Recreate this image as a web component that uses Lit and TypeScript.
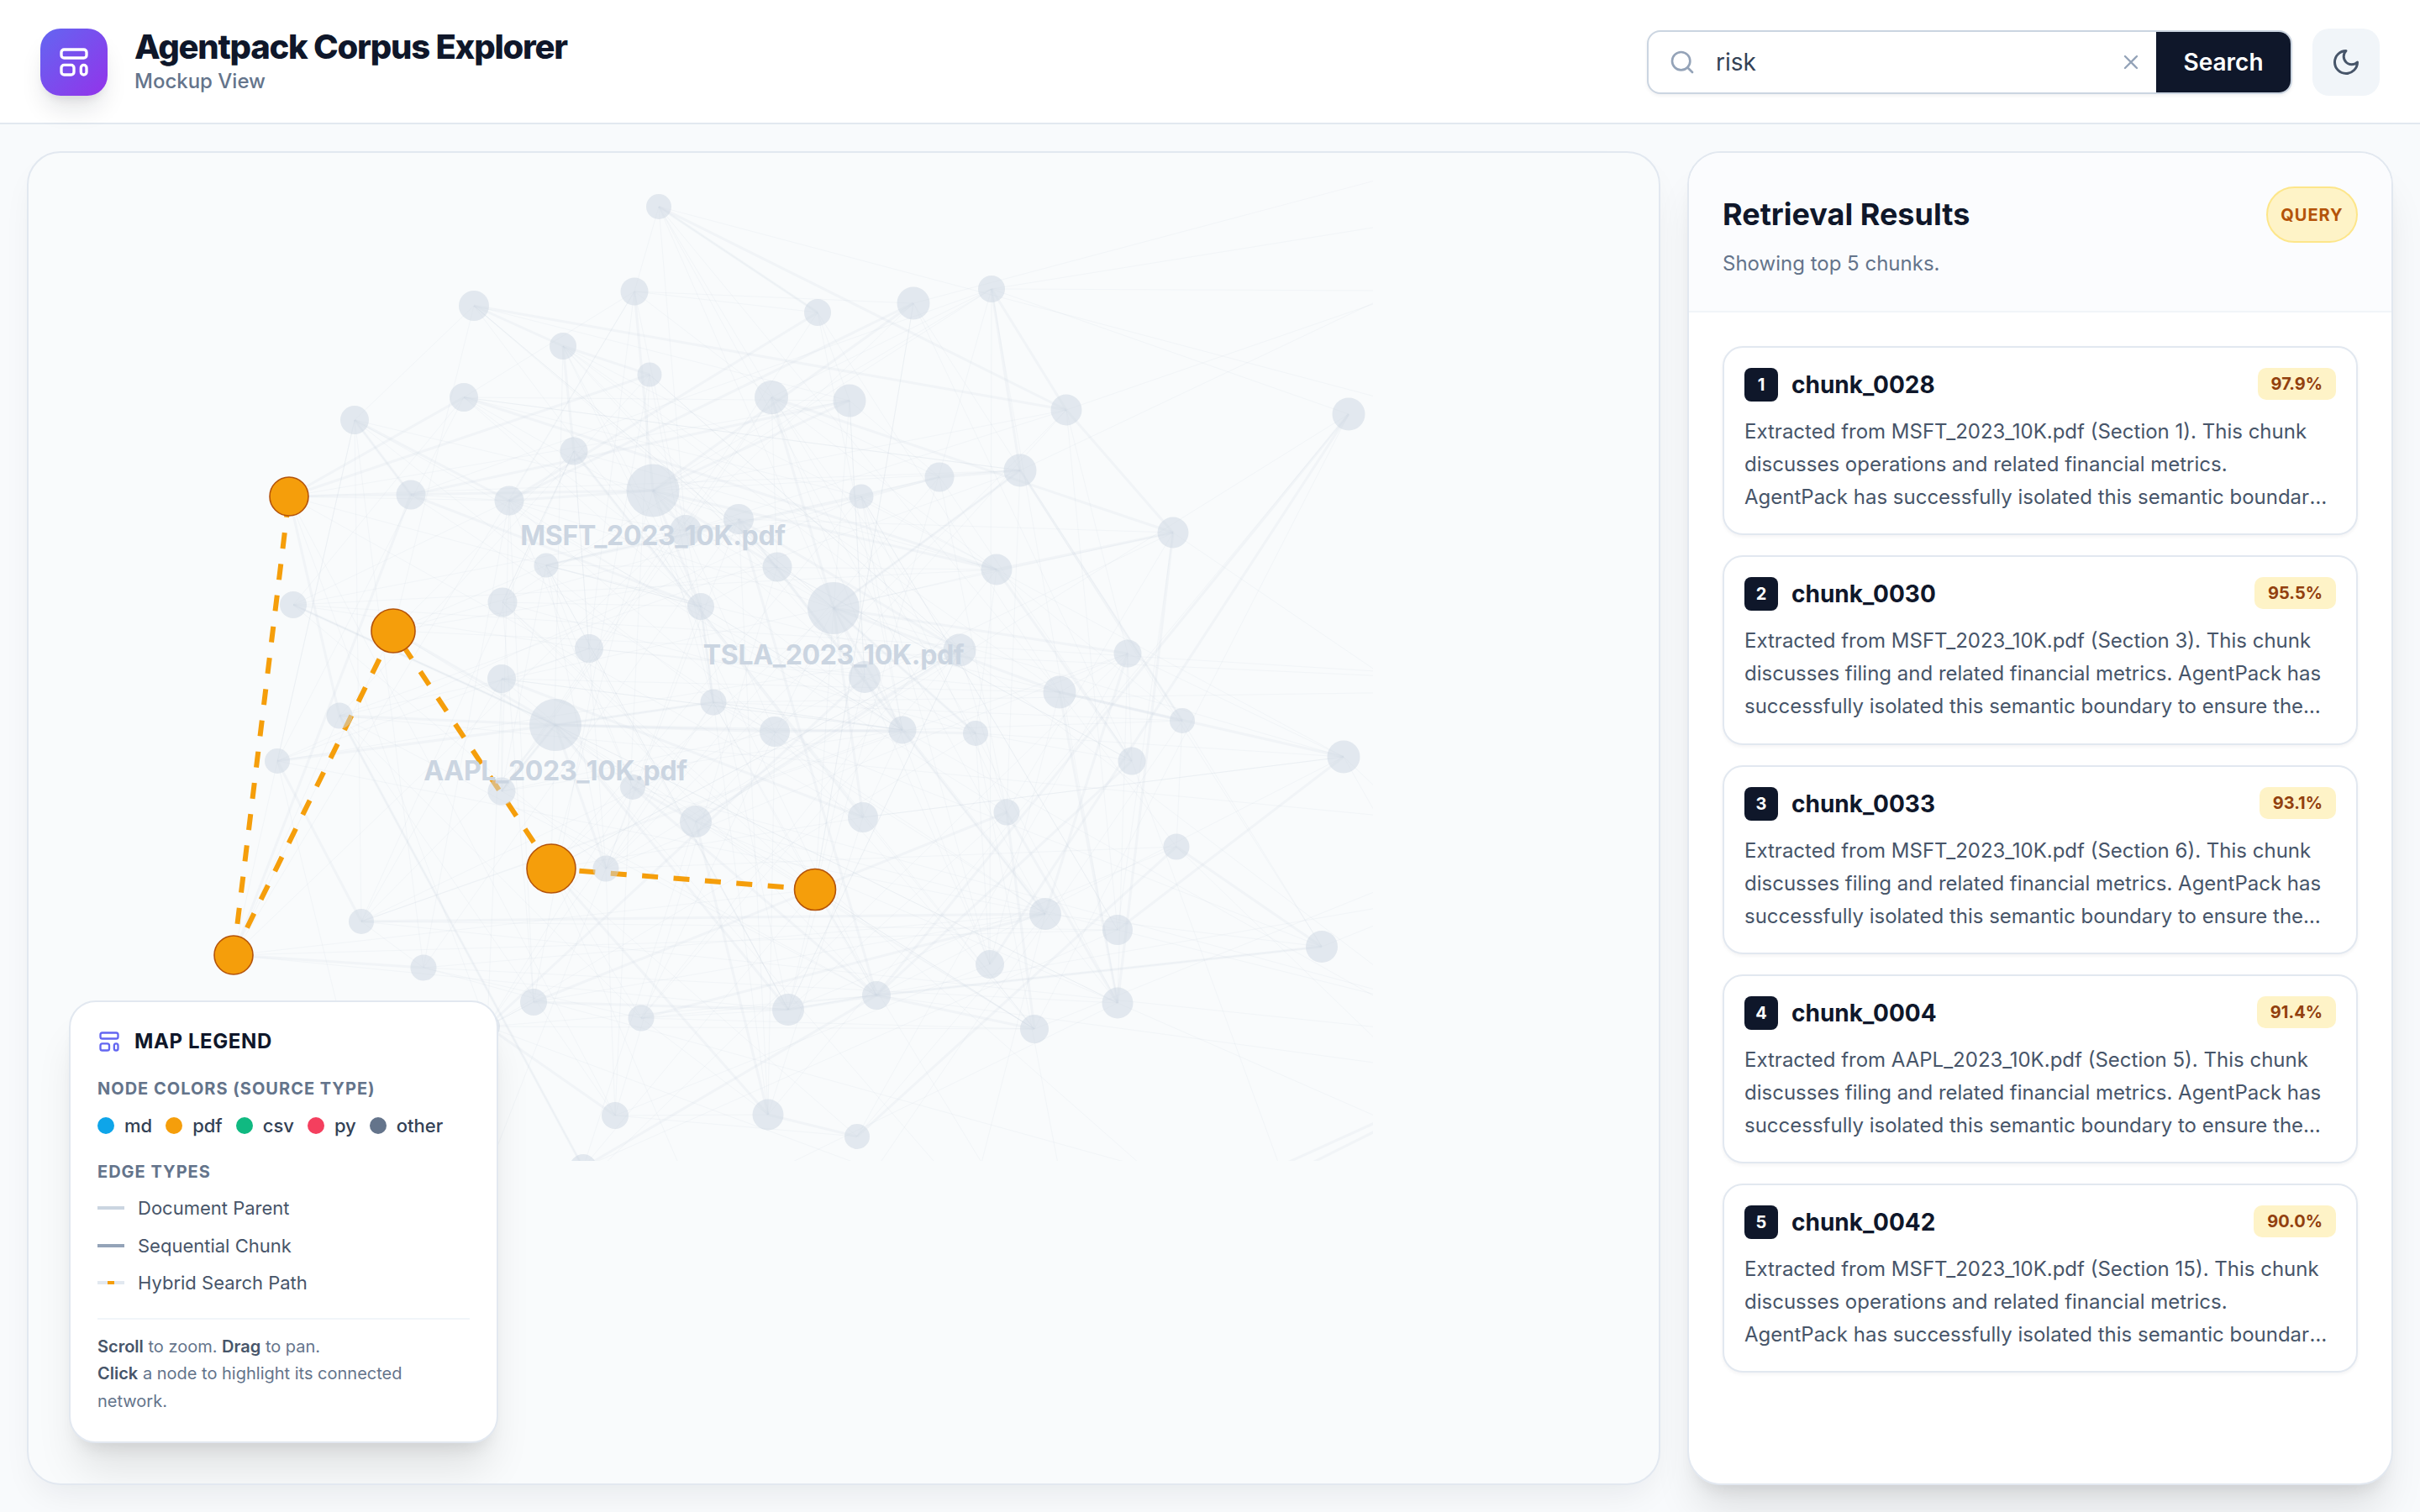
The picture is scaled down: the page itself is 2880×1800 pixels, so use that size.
import { LitElement, css, html, svg } from 'lit'
import { customElement } from 'lit/decorators.js'

// dimmed graph nodes [x, y, r], page pixels
const NODES: number[][] = [
  [784, 246, 15], [564, 364, 18], [755, 347, 16.5], [973, 372, 16], [670, 412, 16],
  [773, 446, 14.5], [552, 473, 17], [918, 473, 20], [1011, 477, 19.5], [422, 500, 17],
  [683, 537, 16.5], [777, 584, 31.5], [489, 589, 17.5], [606, 596, 17.5], [879, 618, 18],
  [816, 632, 19], [650, 673, 14.5], [925, 675, 17.5], [1087, 361, 19.5], [1180, 344, 16],
  [1269, 488, 18.5], [1605, 493, 19.5], [1214, 560, 19.5], [1118, 568, 17.5], [1025, 591, 14.5],
  [1396, 634, 18.5], [1186, 678, 18.5], [349, 720, 16], [598, 717, 17.5], [834, 722, 16],
  [701, 772, 17], [597, 808, 17], [849, 836, 15.5], [661, 863, 31], [404, 852, 15.5],
  [922, 871, 18], [330, 906, 15], [597, 942, 16.5], [753, 937, 15], [828, 978, 19],
  [721, 1034, 15.5], [430, 1097, 15], [504, 1152, 15.5], [635, 1193, 16], [763, 1212, 15.5],
  [938, 1202, 19], [1043, 1185, 17], [732, 1328, 16], [914, 1327, 18.5], [1020, 1353, 15],
  [694, 1390, 16], [580, 1222, 15], [992, 724, 31], [1142, 774, 19.5], [1029, 806, 19],
  [1342, 778, 16.5], [1261, 824, 19.5], [1407, 858, 15], [1074, 869, 16.5], [1161, 873, 15],
  [1347, 906, 16.5], [1599, 901, 19.5], [1027, 973, 18], [1198, 967, 15.5], [1400, 1008, 15.5],
  [1244, 1088, 19], [1330, 1107, 18], [1573, 1127, 19], [1178, 1148, 17], [1330, 1194, 18.5],
  [1231, 1225, 17],
]

// search hits, drawn on top
const HITS: number[][] = [
  [344, 591, 23], [468, 751, 26], [656, 1034, 29], [970, 1059, 24.5], [278, 1137, 23],
]

// hits are joined by dashed lines, each one starts at the first point
const PATHS: number[][] = [
  [278, 1137, 344, 591], [468, 751, 278, 1137], [656, 1034, 468, 751], [970, 1059, 656, 1034],
]

// nodes outside the visible canvas, lines run off towards them
const OFFSCREEN: number[][] = [
  [1900, 640], [1980, 820], [2050, 1010], [1900, 1250], [1820, 1290], [1760, 1500], [1600, 1600], [1300, 1600], [1100, 1650], [900, 1600], [500, 1600],
]

// faint lines that leave the canvas on the right, seen in the picture
const RUNOFF_THIN: number[][] = [
  [1087, 361, 1640, 214], [1180, 344, 1640, 270], [1180, 344, 1640, 346], [1269, 488, 1640, 360],
  [784, 246, 1640, 473], [1214, 560, 1640, 358], [1573, 1127, 1640, 1100], [1599, 901, 1640, 940],
  [1400, 1008, 1640, 1240], [1330, 1194, 1640, 1330], [1231, 1225, 1640, 1060], [1396, 634, 1640, 800],
]
const RUNOFF_HEAVY: number[][] = [
  [1530, 1385, 1640, 1335], [1560, 1385, 1640, 1345],
]

const at = (x: number, y: number) => {
  let best = NODES[0]
  let dist = 1e9
  for (const n of [...NODES, ...HITS]) {
    const d = Math.hypot(n[0] - x, n[1] - y)
    if (d < dist) { dist = d; best = n }
  }
  return best
}

// the heavier lines that stand out in the picture, by rough end points
const HEAVY_PAIRS: number[][] = [
  [564, 364, 1269, 488], [564, 364, 670, 412], [670, 412, 773, 446], [670, 412, 683, 537], [552, 473, 1186, 678],
  [422, 500, 606, 596], [422, 500, 489, 589], [344, 591, 773, 446], [344, 591, 552, 473], [344, 591, 777, 584],
  [784, 246, 1269, 488], [1180, 344, 1214, 560], [1180, 344, 1269, 488], [1269, 488, 1396, 634], [918, 473, 1396, 634],
  [1605, 493, 1043, 1185], [1605, 493, 1178, 1148], [1599, 901, 1330, 1107], [1599, 901, 1261, 824], [1407, 858, 1261, 824],
  [1573, 1127, 1043, 1185], [1573, 1127, 1400, 1008], [1347, 906, 1043, 1185], [1261, 824, 1330, 1194], [1198, 967, 1231, 1225],
  [1020, 1353, 1400, 1008], [1020, 1353, 914, 1327], [694, 1390, 1043, 1185], [732, 1328, 580, 1222], [635, 1193, 938, 1202],
  [938, 1202, 1043, 1185], [661, 863, 922, 871], [661, 863, 404, 852], [330, 906, 661, 863], [278, 1137, 504, 1152],
  [430, 1097, 1244, 1088], [404, 852, 694, 1390], [349, 720, 661, 863], [828, 978, 753, 937], [914, 1327, 828, 978],
  [1087, 361, 606, 596], [973, 372, 606, 596], [1087, 361, 777, 584], [1214, 560, 1118, 568], [1118, 568, 1025, 591],
  [1396, 634, 1186, 678], [1186, 678, 777, 584], [992, 724, 1261, 824], [992, 724, 1161, 873], [992, 724, 918, 473],
  [992, 724, 1214, 560], [992, 724, 1342, 778], [992, 724, 1074, 869], [992, 724, 1027, 973], [777, 584, 1011, 477],
  [777, 584, 816, 632], [777, 584, 925, 675], [777, 584, 755, 347], [661, 863, 597, 942], [661, 863, 721, 1034],
  [661, 863, 849, 836], [661, 863, 1161, 873], [1198, 967, 1330, 1194], [1244, 1088, 1342, 778], [1043, 1185, 1231, 1225],
]

function rng(seed: number) {
  return () => {
    seed = (seed + 0x6d2b79f5) | 0
    let t = Math.imul(seed ^ (seed >>> 15), 1 | seed)
    t = (t + Math.imul(t ^ (t >>> 7), 61 | t)) ^ t
    return ((t ^ (t >>> 14)) >>> 0) / 4294967296
  }
}

function buildEdges() {
  const r = rng(4217)
  const all = [...NODES, ...HITS]
  const heavy: number[][] = HEAVY_PAIRS.map((p) => {
    const a = at(p[0], p[1])
    const b = at(p[2], p[3])
    return [a[0], a[1], b[0], b[1]]
  })
  heavy.push(...RUNOFF_HEAVY)
  const thin: number[][] = [...RUNOFF_THIN]
  for (const a of all) {
    for (let k = 0; k < 5; k++) {
      const b = all[Math.floor(r() * all.length)]
      if (b === a) continue
      const d = Math.hypot(a[0] - b[0], a[1] - b[1])
      if (d > 760 && r() < 0.7) continue
      thin.push([a[0], a[1], b[0], b[1]])
    }
    if (a[1] > 700 && r() < 0.6) {
      const o = OFFSCREEN[Math.floor(r() * OFFSCREEN.length)]
      thin.push([a[0], a[1], o[0], o[1]])
    }
    if (r() < 0.55) {
      const b = all[Math.floor(r() * all.length)]
      if (b !== a && Math.hypot(a[0] - b[0], a[1] - b[1]) < 620) heavy.push([a[0], a[1], b[0], b[1]])
    }
  }
  return { heavy, thin }
}

const EDGES = buildEdges()

const LABELS = [
  { x: 777, y: 649, t: 'MSFT_2023_10K.pdf' },
  { x: 992, y: 791, t: 'TSLA_2023_10K.pdf' },
  { x: 661, y: 929, t: 'AAPL_2023_10K.pdf' },
]

const tail = 'AgentPack has successfully isolated this semantic boundary to ensure the retrieved context stays coherent for downstream agents.'

const CHUNKS = [
  { id: 'chunk_0028', score: '97.9%', text: `Extracted from MSFT_2023_10K.pdf (Section 1). This chunk discusses operations and related financial metrics. ${tail}` },
  { id: 'chunk_0030', score: '95.5%', text: `Extracted from MSFT_2023_10K.pdf (Section 3). This chunk discusses filing and related financial metrics. ${tail}` },
  { id: 'chunk_0033', score: '93.1%', text: `Extracted from MSFT_2023_10K.pdf (Section 6). This chunk discusses filing and related financial metrics. ${tail}` },
  { id: 'chunk_0004', score: '91.4%', text: `Extracted from AAPL_2023_10K.pdf (Section 5). This chunk discusses filing and related financial metrics. ${tail}` },
  { id: 'chunk_0042', score: '90.0%', text: `Extracted from MSFT_2023_10K.pdf (Section 15). This chunk discusses operations and related financial metrics. ${tail}` },
]

const SOURCES = ['md', 'pdf', 'csv', 'py', 'other']

const templateIcon = (cls: string) => html`
  <svg class=${cls} viewBox="0 0 24 24" fill="none" stroke="currentColor" stroke-width="2">
    <rect x="3" y="3" width="18" height="6" rx="2"></rect>
    <rect x="3" y="14" width="9" height="7" rx="2"></rect>
    <rect x="17" y="14" width="4" height="7" rx="2"></rect>
  </svg>
`

@customElement('app-root')
export class AppRoot extends LitElement {
  static styles = css`
    :host {
      display: flex;
      flex-direction: column;
      height: 1800px;
      overflow: hidden;
      background: #f8fafc;
      font-family: Inter, "Liberation Sans", sans-serif;
      color: #0f172a;
    }
    * { box-sizing: border-box; }

    .top {
      display: flex;
      align-items: center;
      justify-content: space-between;
      height: 148px;
      padding: 34px 48px 32px;
      background: #fff;
      border-bottom: 2px solid #e2e8f0;
      flex: none;
    }
    .brand { display: flex; align-items: center; gap: 32px; }
    .logo {
      width: 80px;
      height: 80px;
      border-radius: 24px;
      background: linear-gradient(135deg, #6366f1, #9333ea);
      box-shadow: 0 20px 30px -6px rgba(15, 23, 42, 0.12), 0 8px 12px -6px rgba(15, 23, 42, 0.1);
      display: flex;
      align-items: center;
      justify-content: center;
      color: #fff;
    }
    .logo-icon { width: 40px; height: 40px; }
    .brand-text { margin-top: -3px; }
    .title { font-size: 40px; line-height: 44px; font-weight: 800; letter-spacing: -0.031em; }
    .sub { font-size: 24px; line-height: 30px; font-weight: 500; color: #64748b; margin-top: 4px; }

    .tools { display: flex; align-items: center; gap: 24px; }
    .search {
      display: flex;
      width: 768px;
      height: 76px;
      border: 2px solid #cbd5e1;
      border-radius: 16px;
      overflow: hidden;
      background: #fff;
      box-shadow: 0 2px 4px rgba(15, 23, 42, 0.06);
    }
    .field { flex: 1; display: flex; align-items: center; padding: 0 16px 0 24px; }
    .search-icon { width: 32px; height: 32px; color: #94a3b8; flex: none; }
    .query { flex: 1; margin-left: 24px; font-size: 28px; color: #334155; }
    .clear { width: 28px; height: 28px; color: #94a3b8; flex: none; }
    .go {
      width: 160px;
      display: flex;
      align-items: center;
      justify-content: center;
      background: #0f172a;
      color: #fff;
      font-size: 28px;
      font-weight: 600;
    }
    .theme {
      width: 80px;
      height: 80px;
      border-radius: 20px;
      background: #f1f5f9;
      color: #475569;
      display: flex;
      align-items: center;
      justify-content: center;
    }
    .moon { width: 36px; height: 36px; }

    .main { flex: 1; min-height: 0; display: flex; gap: 32px; padding: 32px; }
    .map {
      flex: 1;
      position: relative;
      overflow: hidden;
      background: #f9fbfc;
      border: 2px solid #e2e8f0;
      border-radius: 40px;
      box-shadow: 0 20px 40px -12px rgba(15, 23, 42, 0.08);
    }
    .graph { position: absolute; left: 0; top: 0; width: 1600px; height: 1200px; display: block; }
    .heavy { stroke: #cbd5e1; stroke-width: 3; opacity: 0.16; }
    .thin { stroke: #cbd5e1; stroke-width: 1; opacity: 0.15; }
    .dash { stroke: #f59e0b; stroke-width: 6; stroke-dasharray: 19 18.5; }
    .dim { fill: #cbd5e1; opacity: 0.5; }
    .hit { fill: #f59e0b; stroke: #b45309; stroke-width: 1.6; }
    .doc { fill: #cbd5e1; font-size: 32px; font-weight: 700; letter-spacing: -0.01em; text-anchor: middle; }

    .legend {
      position: absolute;
      left: 48px;
      bottom: 48px;
      width: 511px;
      padding: 32px;
      background: #fff;
      border: 2px solid #e2e8f0;
      border-radius: 32px;
      box-shadow: 0 40px 50px -10px rgba(0, 0, 0, 0.1), 0 16px 20px -12px rgba(0, 0, 0, 0.1);
    }
    .legend-head {
      display: flex;
      align-items: center;
      gap: 16px;
      font-size: 24px;
      line-height: 28px;
      font-weight: 700;
      letter-spacing: 0.025em;
      margin-bottom: 30px;
      padding-top: 1px;
    }
    .legend-icon { width: 28px; height: 28px; color: #6366f1; }
    .caption { font-size: 20px; line-height: 24px; font-weight: 700; letter-spacing: 0.05em; color: #64748b; }
    .caption.first { margin-bottom: 16px; }
    .caption.second { margin-bottom: 15px; }
    .sources { display: flex; gap: 16px; margin-bottom: 27px; }
    .source { display: flex; align-items: center; gap: 12px; font-size: 22px; line-height: 32px; font-weight: 500; color: #334155; }
    .dot { width: 20px; height: 20px; border-radius: 50%; }
    .dot.md { background: #0ea5e9; }
    .dot.pdf { background: #f59e0b; }
    .dot.csv { background: #10b981; }
    .dot.py { background: #f43f5e; }
    .dot.other { background: #64748b; }
    .edge-row { display: flex; align-items: center; gap: 16px; font-size: 22px; line-height: 32px; color: #475569; margin-bottom: 12.5px; }
    .swatch { width: 32px; height: 4px; position: relative; }
    .swatch.parent { background: #cbd5e1; }
    .swatch.seq { background: #94a3b8; }
    .swatch.path { background: #e2e8f0; display: flex; justify-content: center; }
    .swatch.path span { width: 8px; height: 4px; background: #f59e0b; }
    .hint {
      margin-top: 25.5px;
      padding-top: 16px;
      border-top: 2px solid #f1f5f9;
      font-size: 20px;
      line-height: 32.5px;
      color: #64748b;
    }
    .hint b { font-weight: 600; color: #475569; }

    .results {
      width: 840px;
      flex: none;
      background: #fff;
      border: 2px solid #e2e8f0;
      border-radius: 40px;
      box-shadow: 0 40px 50px -10px rgba(0, 0, 0, 0.1), 0 16px 20px -12px rgba(0, 0, 0, 0.1);
      overflow: hidden;
    }
    .results-head { padding: 40px; background: #fbfcfe; border-bottom: 2px solid #f1f5f9; height: 190px; }
    .results-row { display: flex; align-items: center; justify-content: space-between; }
    .results-title { font-size: 36px; font-weight: 700; margin-bottom: 2px; }
    .pill {
      height: 67px;
      width: 109px;
      border-radius: 999px;
      border: 2px solid #fde68a;
      background: #fef3c7;
      color: #b45309;
      font-size: 20px;
      font-weight: 700;
      letter-spacing: 0.05em;
      display: flex;
      align-items: center;
      justify-content: center;
    }
    .results-sub { font-size: 24px; line-height: 39px; color: #64748b; margin-top: 5px; }
    .list { padding: 40px; display: flex; flex-direction: column; gap: 24px; }
    .card {
      height: 225.3px;
      padding: 24px;
      background: #fff;
      border: 2px solid #e2e8f0;
      border-radius: 24px;
      box-shadow: 0 2px 4px rgba(15, 23, 42, 0.05);
    }
    .card-head { display: flex; align-items: flex-start; justify-content: space-between; height: 40px; margin-bottom: 16px; }
    .card-name { display: flex; align-items: center; gap: 16px; font-size: 28px; font-weight: 700; }
    .rank {
      width: 40px;
      height: 40px;
      border-radius: 8px;
      background: #0f172a;
      color: #fff;
      font-size: 20px;
      font-weight: 700;
      display: flex;
      align-items: center;
      justify-content: center;
    }
    .score {
      height: 38px;
      padding: 0 16px;
      border-radius: 10px;
      background: #fef3c7;
      color: #92400e;
      font-size: 20px;
      font-weight: 700;
      display: flex;
      align-items: center;
    }
    .card-text {
      margin: 0;
      font-size: 24px;
      line-height: 39px;
      color: #475569;
      display: -webkit-box;
      -webkit-box-orient: vertical;
      -webkit-line-clamp: 3;
      overflow: hidden;
    }
  `

  render() {
    return html`
      <header class="top">
        <div class="brand">
          <div class="logo">${templateIcon('logo-icon')}</div>
          <div class="brand-text">
            <div class="title">Agentpack Corpus Explorer</div>
            <div class="sub">Mockup View</div>
          </div>
        </div>
        <div class="tools">
          <div class="search">
            <div class="field">
              <svg class="search-icon" viewBox="0 0 24 24" fill="none" stroke="currentColor" stroke-width="2" stroke-linecap="round">
                <circle cx="11" cy="11" r="8"></circle>
                <path d="m21 21-4.35-4.35"></path>
              </svg>
              <span class="query">risk</span>
              <svg class="clear" viewBox="0 0 24 24" fill="none" stroke="currentColor" stroke-width="2" stroke-linecap="round">
                <path d="M18 6 6 18M6 6l12 12"></path>
              </svg>
            </div>
            <div class="go">Search</div>
          </div>
          <div class="theme">
            <svg class="moon" viewBox="0 0 24 24" fill="none" stroke="currentColor" stroke-width="2" stroke-linecap="round" stroke-linejoin="round">
              <path d="M12 3a6 6 0 0 0 9 9 9 9 0 1 1-9-9Z"></path>
            </svg>
          </div>
        </div>
      </header>
      <div class="main">
        <section class="map">
          ${this.renderGraph()}
          ${this.renderLegend()}
        </section>
        <aside class="results">
          <div class="results-head">
            <div class="results-row">
              <div class="results-title">Retrieval Results</div>
              <div class="pill">QUERY</div>
            </div>
            <div class="results-sub">Showing top 5 chunks.</div>
          </div>
          <div class="list">
            ${CHUNKS.map((c, i) => html`
              <article class="card">
                <div class="card-head">
                  <div class="card-name"><span class="rank">${i + 1}</span>${c.id}</div>
                  <div class="score">${c.score}</div>
                </div>
                <p class="card-text">${c.text}</p>
              </article>
            `)}
          </div>
        </aside>
      </div>
    `
  }

  renderGraph() {
    return html`
      <svg class="graph" viewBox="34 182 1600 1200">
        ${EDGES.thin.map((e) => svg`<line class="thin" x1=${e[0]} y1=${e[1]} x2=${e[2]} y2=${e[3]}></line>`)}
        ${EDGES.heavy.map((e) => svg`<line class="heavy" x1=${e[0]} y1=${e[1]} x2=${e[2]} y2=${e[3]}></line>`)}
        ${PATHS.map((e) => svg`<line class="dash" x1=${e[0]} y1=${e[1]} x2=${e[2]} y2=${e[3]}></line>`)}
        ${NODES.map((n) => svg`<circle class="dim" cx=${n[0]} cy=${n[1]} r=${n[2]}></circle>`)}
        ${LABELS.map((l) => svg`<text class="doc" x=${l.x} y=${l.y}>${l.t}</text>`)}
        ${HITS.map((n) => svg`<circle class="hit" cx=${n[0]} cy=${n[1]} r=${n[2]}></circle>`)}
      </svg>
    `
  }

  renderLegend() {
    return html`
      <div class="legend">
        <div class="legend-head">${templateIcon('legend-icon')}MAP LEGEND</div>
        <div class="caption first">NODE COLORS (SOURCE TYPE)</div>
        <div class="sources">
          ${SOURCES.map((s) => html`<div class="source"><span class="dot ${s}"></span>${s}</div>`)}
        </div>
        <div class="caption second">EDGE TYPES</div>
        <div class="edge-row"><span class="swatch parent"></span>Document Parent</div>
        <div class="edge-row"><span class="swatch seq"></span>Sequential Chunk</div>
        <div class="edge-row"><span class="swatch path"><span></span></span>Hybrid Search Path</div>
        <div class="hint">
          <b>Scroll</b> to zoom. <b>Drag</b> to pan.<br />
          <b>Click</b> a node to highlight its connected network.
        </div>
      </div>
    `
  }
}
